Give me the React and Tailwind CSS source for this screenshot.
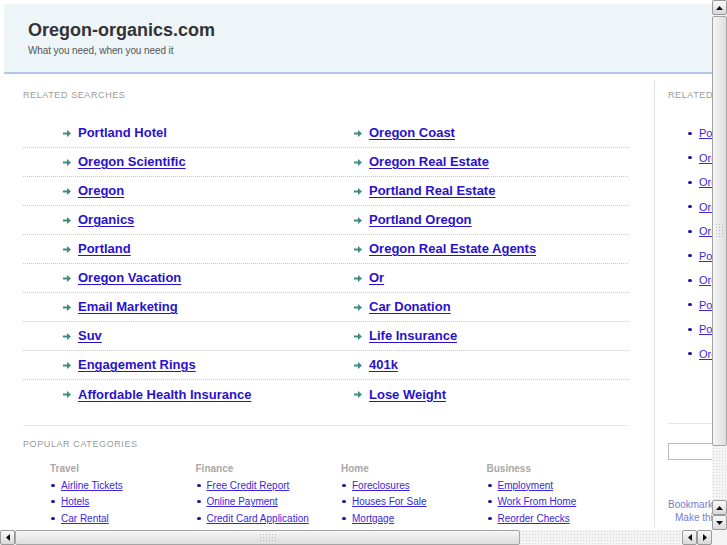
import React from "react";

const searches = [
  ["Portland Hotel", "Oregon Coast"],
  ["Oregon Scientific", "Oregon Real Estate"],
  ["Oregon", "Portland Real Estate"],
  ["Organics", "Portland Oregon"],
  ["Portland", "Oregon Real Estate Agents"],
  ["Oregon Vacation", "Or"],
  ["Email Marketing", "Car Donation"],
  ["Suv", "Life Insurance"],
  ["Engagement Rings", "401k"],
  ["Affordable Health Insurance", "Lose Weight"],
];

const sidebar = [
  "Portland Hotel",
  "Oregon Coast",
  "Oregon Scientific",
  "Oregon Real Estate",
  "Oregon",
  "Portland Real Estate",
  "Organics",
  "Portland Oregon",
  "Portland",
  "Oregon Real Estate Agents",
];

const categories = [
  { title: "Travel", links: ["Airline Tickets", "Hotels", "Car Rental"] },
  { title: "Finance", links: ["Free Credit Report", "Online Payment", "Credit Card Application"] },
  { title: "Home", links: ["Foreclosures", "Houses For Sale", "Mortgage"] },
  { title: "Business", links: ["Employment", "Work From Home", "Reorder Checks"] },
];

function Arrow() {
  return (
    <svg width="8" height="7" viewBox="0 0 8 7" className="shrink-0">
      <path d="M0 2.5h4V0l4 3.5L4 7V4.5H0z" fill="#3f8b80" />
    </svg>
  );
}

function Tri({ dir }) {
  const d = {
    up: "M1 5L4.5 1L8 5z",
    down: "M1 1L4.5 5L8 1z",
    left: "M5 1L1 4.5L5 8z",
    right: "M1 1L5 4.5L1 8z",
  }[dir];
  const size = dir === "up" || dir === "down" ? [9, 6] : [6, 9];
  return (
    <svg width={size[0]} height={size[1]} viewBox={`0 0 ${size[0]} ${size[1]}`}>
      <path d={d} fill="#111" />
    </svg>
  );
}

function SbButton({ dir }) {
  return (
    <div className="w-[15px] h-[15px] shrink-0 flex items-center justify-center border border-[#9a9a9a] rounded-[2px] bg-gradient-to-b from-[#fafafa] to-[#d9d9d9]">
      <Tri dir={dir} />
    </div>
  );
}

function Grip({ vertical }) {
  return (
    <div className={`${vertical ? "w-[10px] h-[16px]" : "w-[18px] h-[9px]"} bg-[radial-gradient(#b8b8b8_0.7px,transparent_0.8px)] bg-[length:3px_3px]`} />
  );
}

export default function App() {
  return (
    <div className="w-[727px] h-[545px] overflow-hidden bg-white flex flex-col font-['Liberation_Sans',Arial,sans-serif]">
      <div className="flex h-[530px]">
        <div className="w-[712px] h-[530px] overflow-hidden">
          <div className="w-[820px] pt-[4px] pl-[4px]">
            <div className="h-[70px] bg-[#eef5f8] border-b-2 border-[#b0c6ea] pl-[24px] pt-[14px]">
              <div className="text-[18px] font-bold text-[#333] leading-[24px]">Oregon-organics.com</div>
              <div className="text-[10px] text-[#555] leading-[14px] mt-[2px] tracking-[-0.1px]">What you need, when you need it</div>
            </div>
            <div className="flex mt-[6px]">
              <div className="w-[651px] shrink-0 border-r border-[#dce5f1] pl-[19px] pt-[9px]">
                <div className="text-[9px] tracking-[0.6px] text-[#9a9a9a] leading-[12px]">RELATED SEARCHES</div>
                <div className="w-[605px] mt-[18px]">
                  {searches.map((row, i) => (
                    <div
                      key={i}
                      className={`grid grid-cols-[291px_1fr] h-[29px] items-center ${i < searches.length - 1 ? "border-b border-dotted border-[#b9cde8]" : ""}`}
                    >
                      {row.map((t, j) => (
                        <div key={j} className="flex items-center gap-[7px] pl-[40px]">
                          <Arrow />
                          <a
                            href="#"
                            className={`text-[13px] font-bold text-[#2a12cc] leading-[16px] ${i === 0 && j === 0 ? "no-underline" : "underline underline-offset-2"}`}
                          >
                            {t}
                          </a>
                        </div>
                      ))}
                    </div>
                  ))}
                </div>
                <div className="w-[605px] border-t border-[#dde7f3] mt-[16px]" />
                <div className="text-[9px] tracking-[0.6px] text-[#9a9a9a] leading-[12px] mt-[12px]">POPULAR CATEGORIES</div>
                <div className="grid grid-cols-4 w-[582px] ml-[27px] mt-[12px]">
                  {categories.map((c) => (
                    <div key={c.title}>
                      <div className="text-[10px] font-bold text-[#a8a8a8] leading-[13px]">{c.title}</div>
                      <ul className="mt-[2px]">
                        {c.links.map((l) => (
                          <li key={l} className="flex items-center h-[16.5px]">
                            <span className="w-[4px] h-[3px] rounded-full bg-[#221a9a] ml-[1px] mr-[6px]" />
                            <a href="#" className="text-[10px] text-[#3b26dd] underline leading-[13px]">
                              {l}
                            </a>
                          </li>
                        ))}
                      </ul>
                    </div>
                  ))}
                </div>
              </div>
              <div className="pl-[13px] pt-[9px] flex-1">
                <div className="text-[9px] tracking-[0.6px] text-[#9a9a9a] leading-[12px]">RELATED SEARCHES</div>
                <ul className="mt-[20px] pl-[20px]">
                  {sidebar.map((s) => (
                    <li key={s} className="flex items-center h-[24.5px]">
                      <span className="w-[4px] h-[3px] rounded-full bg-[#221a9a] mr-[7px]" />
                      <a href="#" className="text-[11px] text-[#3b26dd] underline whitespace-nowrap leading-[14px]">
                        {s}
                      </a>
                    </li>
                  ))}
                </ul>
                <div className="border-t border-[#dde7f3] mt-[57px]" />
                <input className="block w-[140px] h-[17px] border border-[#bdbdbd] mt-[19px]" />
                <div className="text-[10px] text-[#7b7bcf] leading-[13px] mt-[38px] whitespace-nowrap">Bookmark this page</div>
                <div className="text-[10px] text-[#7b7bcf] leading-[13px] ml-[7px] whitespace-nowrap">Make this your homepage</div>
              </div>
            </div>
          </div>
        </div>
        <div className="w-[15px] h-[530px] flex flex-col bg-[#f4f4f4] bg-[radial-gradient(#d4d4d4_0.7px,transparent_0.8px)] bg-[length:3px_3px]">
          <SbButton dir="up" />
          <div className="h-[430px] mt-[1px] border border-[#a4a4a4] rounded-[2px] bg-gradient-to-r from-[#f6f6f6] to-[#dedede] flex items-center justify-center">
            <Grip vertical />
          </div>
          <div className="flex-1" />
          <SbButton dir="up" />
          <SbButton dir="down" />
        </div>
      </div>
      <div className="flex h-[15px]">
        <div className="w-[712px] flex bg-[#f4f4f4] bg-[radial-gradient(#d4d4d4_0.7px,transparent_0.8px)] bg-[length:3px_3px]">
          <SbButton dir="left" />
          <div className="w-[505px] border border-[#a4a4a4] rounded-[2px] bg-gradient-to-b from-[#f6f6f6] to-[#dedede] flex items-center justify-center">
            <Grip />
          </div>
          <div className="flex-1" />
          <SbButton dir="left" />
          <SbButton dir="right" />
        </div>
        <div className="w-[15px] bg-[#f4f4f4]" />
      </div>
    </div>
  );
}
